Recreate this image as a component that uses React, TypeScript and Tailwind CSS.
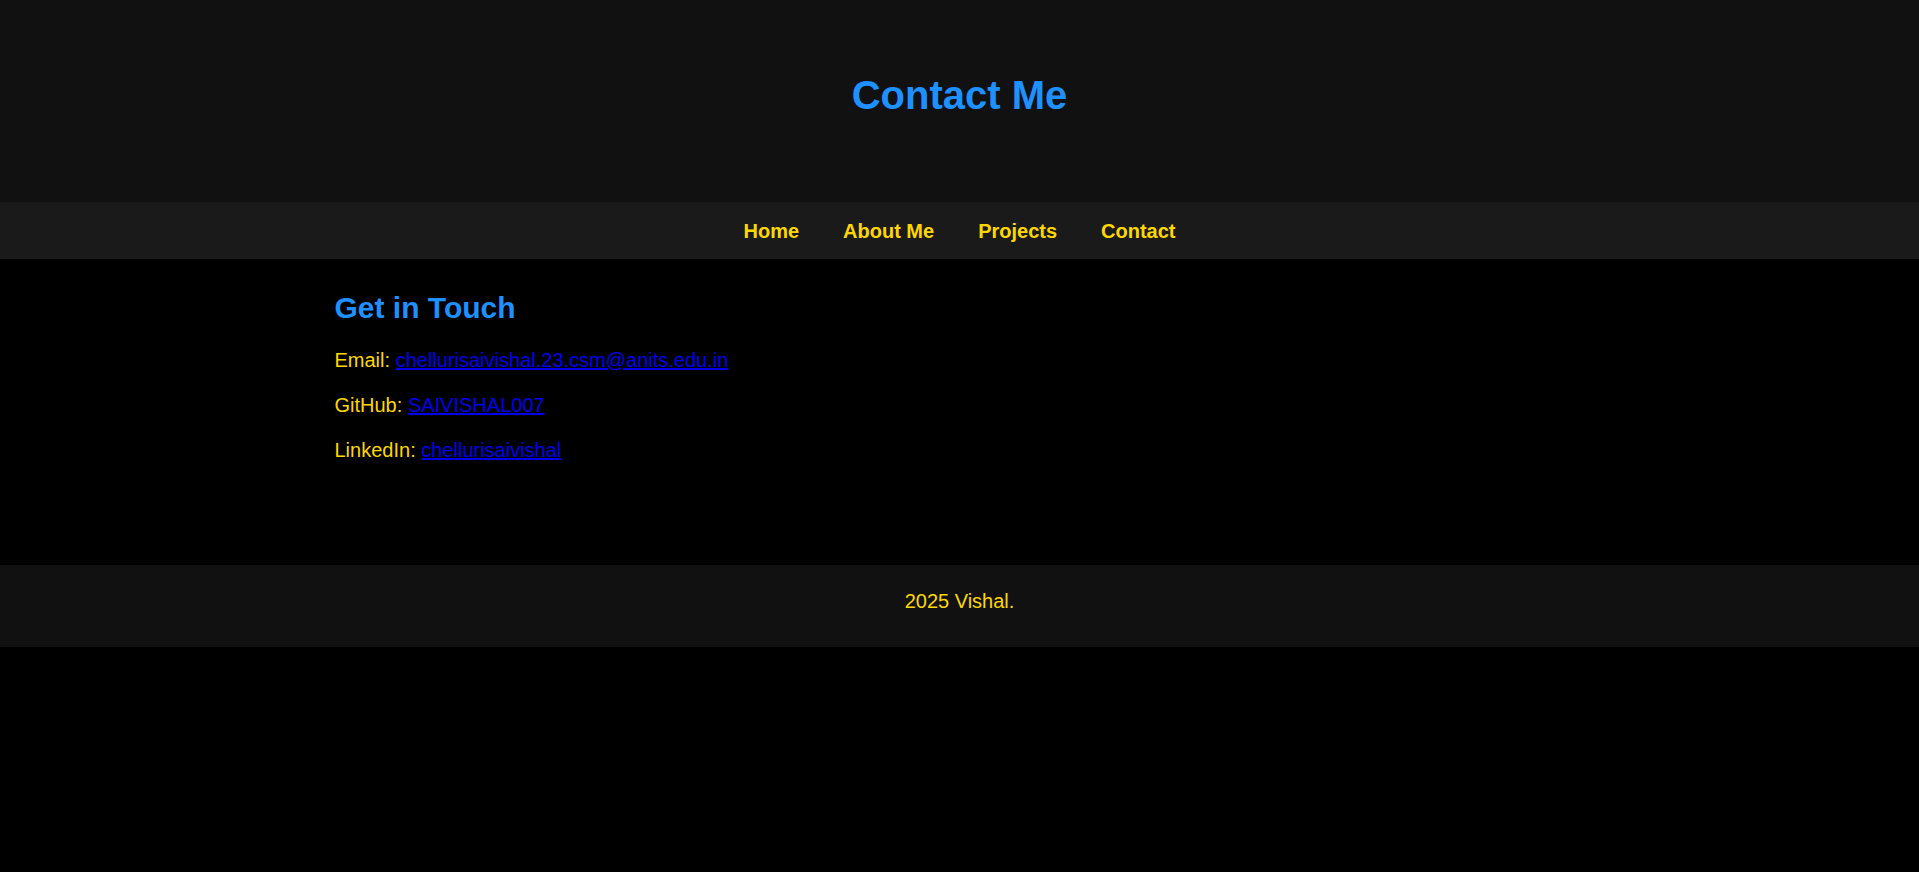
import React from 'react';

const navLinks = ['Home', 'About Me', 'Projects', 'Contact'];

const contacts = [
  { label: 'Email', text: 'chellurisaivishal.23.csm@anits.edu.in', href: 'mailto:chellurisaivishal.23.csm@anits.edu.in' },
  { label: 'GitHub', text: 'SAIVISHAL007', href: '#' },
  { label: 'LinkedIn', text: 'chellurisaivishal', href: '#' },
];

const App: React.FC = () => {
  return (
    <div className="min-h-[872px] bg-black font-['Liberation_Sans',Arial,sans-serif]">
      <header className="bg-[#111111] pt-[72px] pb-[84px] text-center">
        <h1 className="text-[40px] leading-[46px] font-bold text-[#1e90ff]">Contact Me</h1>
      </header>

      <nav className="h-[57px] bg-[#1a1a1a] flex items-center justify-center gap-[44px]">
        {navLinks.map((link) => (
          <a key={link} href="#" className="text-[20px] font-bold text-[#ffd700]">
            {link}
          </a>
        ))}
      </nav>

      <main className="max-w-[1250px] mx-auto pt-[32px] pb-[102px]">
        <h2 className="text-[30px] leading-[34px] font-bold text-[#1e90ff] mb-[23px]">Get in Touch</h2>
        <div className="flex flex-col gap-[20px]">
          {contacts.map((c) => (
            <p key={c.label} className="text-[20px] leading-[25px] text-[#ffd700]">
              {c.label}:{' '}
              <a href={c.href} className="text-[#0000ee] underline">
                {c.text}
              </a>
            </p>
          ))}
        </div>
      </main>

      <footer className="h-[82px] bg-[#111111] pt-[25px] text-center">
        <p className="text-[20px] leading-[23px] text-[#ffd700]">2025 Vishal.</p>
      </footer>
    </div>
  );
};

export default App;
